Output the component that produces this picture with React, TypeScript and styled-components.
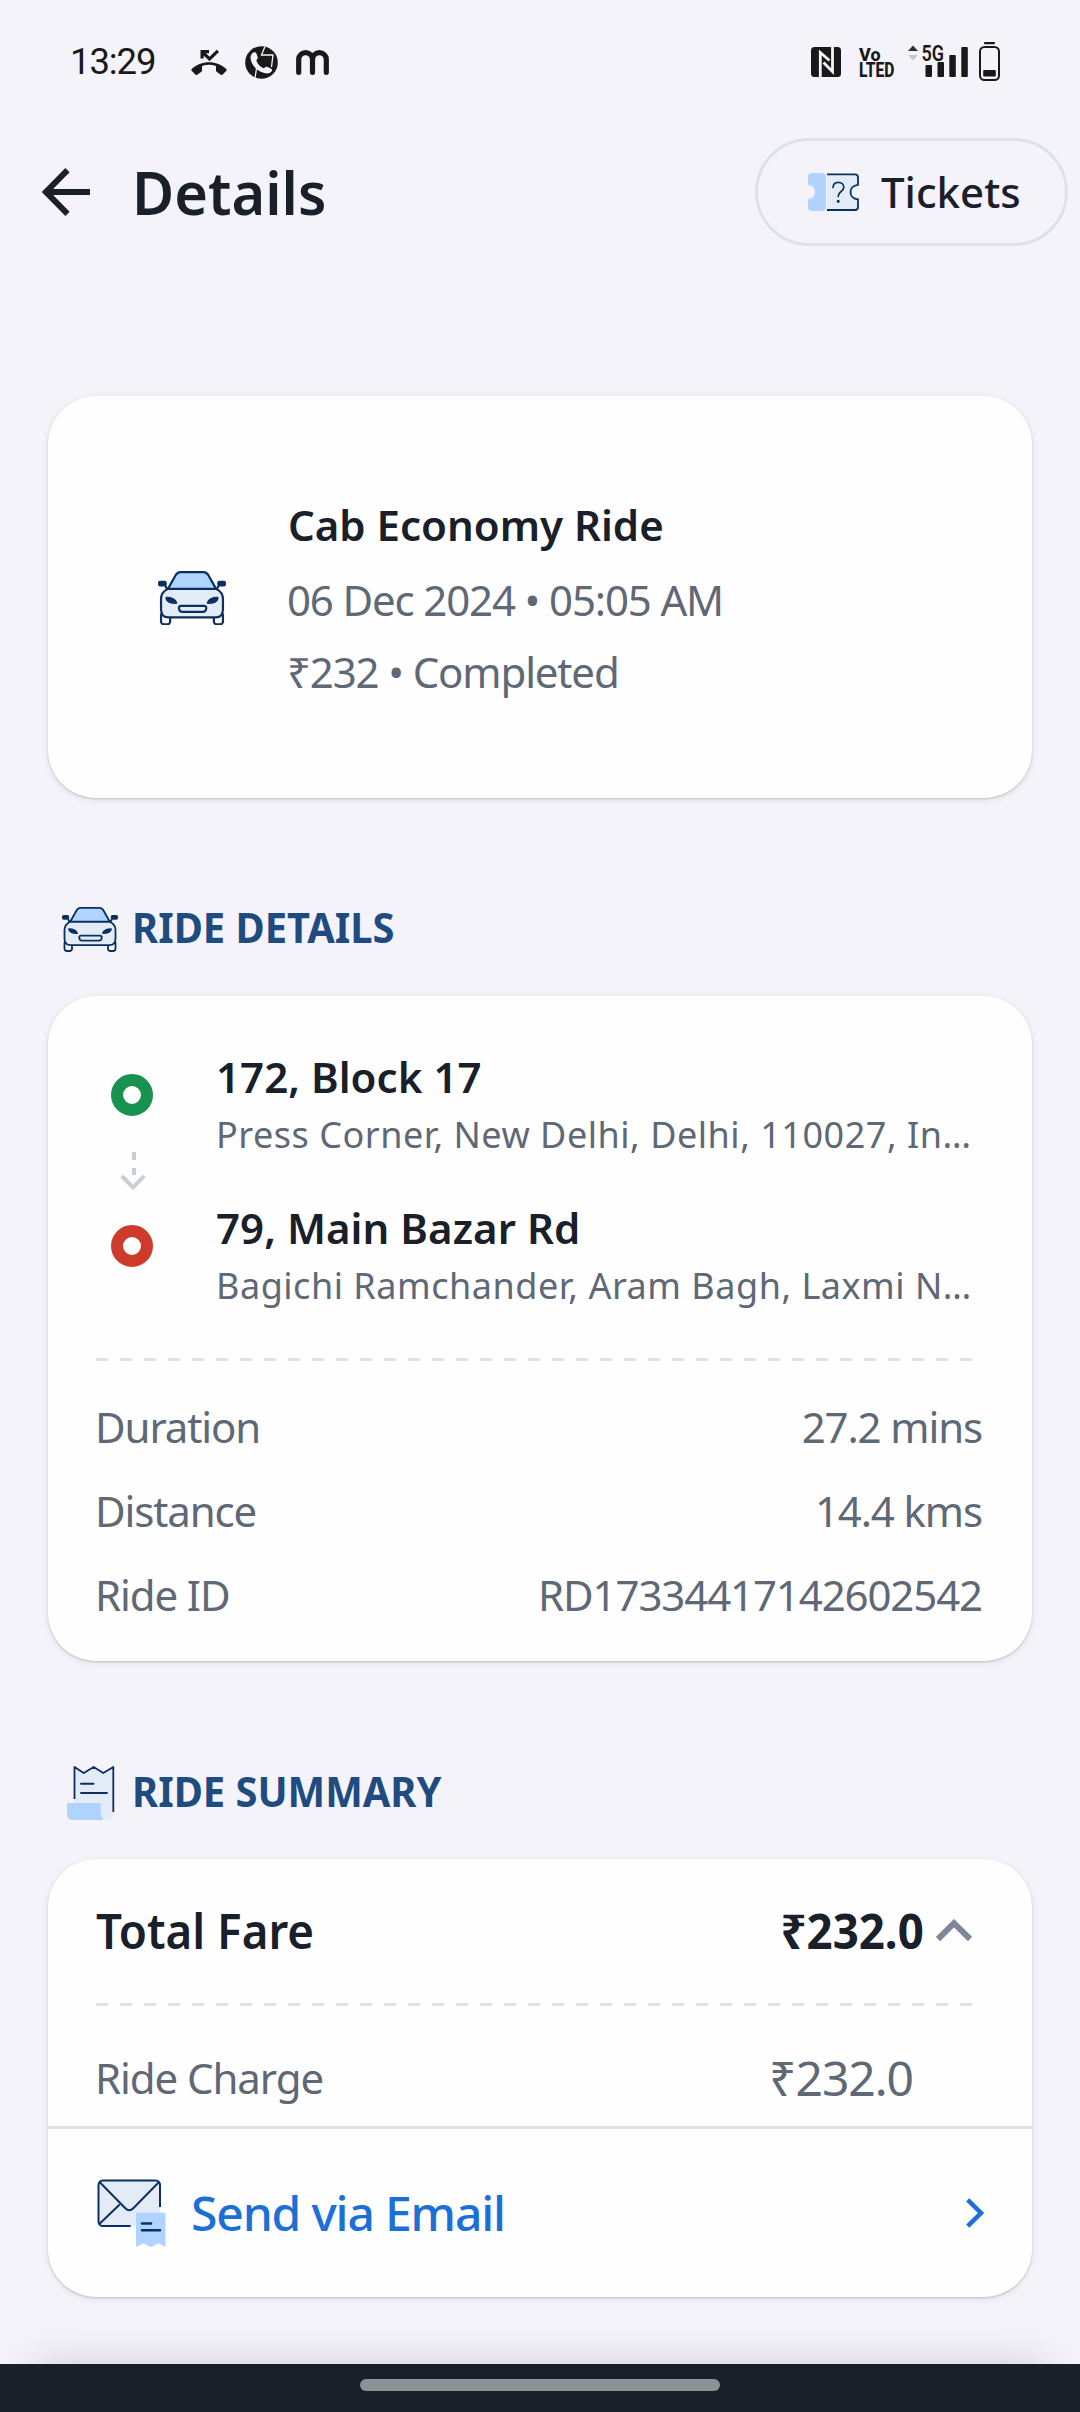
import React from "react";
import styled, { createGlobalStyle } from "styled-components";

const color = {
  page: "#f4f3fa",
  card: "#fefefe",
  ink: "#1a2029",
  muted: "#5f6875",
  heading: "#1f4b80",
  link: "#1b6fd6",
  rule: "#dee2e4",
  iconStroke: "#0b3060",
  iconTint: "#e3ebf6",
  iconBlue: "#b0d4ff",
  status: "#191919",
};

const GlobalStyle = createGlobalStyle`
  * { box-sizing: border-box; }
  body {
    margin: 0;
    background: ${color.page};
    font-family: "Noto Sans", "Open Sans", sans-serif;
    color: ${color.ink};
  }
  svg { display: block; flex: none; }
`;

const Screen = styled.div`
  position: relative;
  display: flex;
  flex-direction: column;
  width: 1080px;
  height: 2412px;
  overflow: hidden;
  background: ${color.page};
`;

/* ---------- status bar ---------- */

const StatusBar = styled.div`
  display: flex;
  align-items: center;
  justify-content: space-between;
  height: 124px;
  padding: 0 80px 0 70px;
`;

const StatusGroup = styled.div`
  display: flex;
  align-items: center;
`;

const Clock = styled.span`
  width: 121px;
  font-family: Roboto, "Noto Sans", sans-serif;
  font-size: 36.5px;
  line-height: 44px;
  letter-spacing: -1.1px;
  color: ${color.status};
`;

const NoticeIcons = styled.div`
  display: flex;
  align-items: center;
  gap: 18px;
`;

/* ---------- header ---------- */

const Header = styled.header`
  display: flex;
  align-items: center;
  height: 108px;
  margin-top: 14px;
  padding: 0 12px 0 42px;
`;

const PageTitle = styled.h1`
  flex: 1;
  margin: 0 0 0 42px;
  font-size: 60px;
  font-weight: 600;
  line-height: 80px;
  transform: scaleX(0.962);
  transform-origin: left;
`;

const TicketsButton = styled.button`
  display: flex;
  align-items: center;
  gap: 22px;
  width: 313px;
  height: 108px;
  padding: 0 0 0 50px;
  border: 3px solid ${color.rule};
  border-radius: 54px;
  background: transparent;
  color: ${color.ink};
  font: 500 42px/60px "Noto Sans", sans-serif;
`;

/* ---------- cards ---------- */

const Card = styled.section`
  flex: none;
  margin: 0 48px;
  border-radius: 48px;
  background: ${color.card};
  box-shadow: 0 1px 2px rgba(0, 0, 0, 0.16), 0 2px 7px rgba(0, 0, 0, 0.09);
`;

const OverviewCard = styled(Card)`
  display: flex;
  align-items: center;
  gap: 61px;
  height: 402px;
  margin-top: 150px;
  padding: 2px 48px 0 110px;
`;

const OverviewLines = styled.div`
  display: flex;
  flex-direction: column;
`;

const OverviewTitle = styled.div`
  height: 75px;
  margin-left: 1px;
  font-size: 42px;
  font-weight: 600;
  line-height: 72px;
`;

const OverviewLine = styled.div`
  font-size: 42px;
  line-height: 72px;
  letter-spacing: -1.15px;
  color: ${color.muted};
`;

const SectionHeading = styled.div<{ $top: number; $bottom: number; $indent: number; $gap: number }>`
  display: flex;
  align-items: center;
  gap: ${(p) => p.$gap}px;
  height: 62px;
  margin: ${(p) => p.$top}px 48px ${(p) => p.$bottom}px ${(p) => p.$indent}px;
`;

const HeadingIcon = styled.span`
  padding-top: 4px;
`;

const HeadingText = styled.h2`
  margin: 0;
  font-size: 42px;
  font-weight: 700;
  line-height: 60px;
  color: ${color.heading};
  transform: scaleX(0.949);
  transform-origin: left;
`;

const DetailsCard = styled(Card)`
  height: 665px;
  padding: 53px 48px 24px;
`;

const Route = styled.div`
  display: grid;
  grid-template-columns: 105px 1fr;
  padding-left: 15px;
`;

const Rail = styled.div`
  display: flex;
  flex-direction: column;
  width: 42px;
  padding-top: 25px;
`;

const StopDot = styled.div<{ $tone: string }>`
  width: 42px;
  height: 42px;
  border: 12px solid ${(p) => p.$tone};
  border-radius: 50%;
`;

const Stops = styled.div`
  display: flex;
  flex-direction: column;
  gap: 37px;
  min-width: 0;
`;

const StopName = styled.div`
  height: 56px;
  font-size: 42px;
  font-weight: 600;
  line-height: 56px;
  letter-spacing: 0.05px;
`;

const StopAddress = styled.div`
  height: 58px;
  font-size: 36px;
  line-height: 60px;
  letter-spacing: 0.52px;
  white-space: nowrap;
  color: ${color.muted};
`;

const DashedRule = styled.div<{ $top?: number }>`
  height: 3px;
  margin-top: ${(p) => p.$top ?? 0}px;
  background: repeating-linear-gradient(90deg, ${color.rule} 0 12px, transparent 12px 24px);
`;

const Facts = styled.dl`
  margin: 24px 0 0;
`;

const Fact = styled.div`
  display: flex;
  justify-content: space-between;
  padding: 0 2px 0 0;
  margin-left: -1px;
  font-size: 42px;
  line-height: 84px;
  letter-spacing: -1.12px;
  color: ${color.muted};
`;

const Term = styled.dt`
  margin: 0;
`;

const Value = styled.dd`
  margin: 0;
`;

/* ---------- fare summary ---------- */

const SummaryCard = styled(Card)`
  height: 438px;
`;

const SummaryBody = styled.div`
  height: 267px;
  padding: 0 48px;
`;

const TotalRow = styled.div`
  display: flex;
  align-items: center;
  height: 144px;
  padding-right: 12px;
  font-size: 48px;
  font-weight: 600;
  line-height: 66px;
`;

const TotalLabel = styled.span`
  flex: 1;
  transform: scaleX(0.952);
  transform-origin: left;
`;

const TotalAmount = styled.span`
  margin-right: 12px;
  font-weight: 700;
  transform: scaleX(0.95);
  transform-origin: right;
`;

const ChargeRow = styled.div`
  display: flex;
  align-items: center;
  justify-content: space-between;
  height: 120px;
  padding: 24px 71px 0 0;
  margin-left: -1px;
  color: ${color.muted};
`;

const ChargeLabel = styled.span`
  font-size: 42px;
  line-height: 60px;
  letter-spacing: -1.08px;
`;

const ChargeAmount = styled.span`
  font-size: 48px;
  line-height: 60px;
  letter-spacing: -1.04px;
`;

const EmailRow = styled.button`
  display: flex;
  align-items: center;
  width: 100%;
  height: 171px;
  padding: 0 48px 0 49px;
  border: 0;
  border-top: 3px solid ${color.rule};
  background: transparent;
  color: ${color.link};
`;

const EmailLabel = styled.span`
  flex: 1;
  margin-left: 25px;
  text-align: left;
  font: 500 48px/66px "Noto Sans", sans-serif;
  letter-spacing: -1.16px;
`;

/* ---------- bottom navigation ---------- */

const NavBar = styled.div`
  position: relative;
  display: flex;
  justify-content: center;
  height: 48px;
  margin-top: auto;
  padding-top: 15px;
  background: ${color.ink};
`;

const NavShadow = styled.div`
  position: absolute;
  left: 36px;
  right: 36px;
  bottom: 0;
  height: 44px;
  box-shadow: 0 0 46px rgba(0, 0, 0, 0.18);
`;

const NavHandle = styled.div`
  width: 360px;
  height: 12px;
  border-radius: 6px;
  background: #8d9094;
`;

/* ---------- icons ---------- */

const MissedCallIcon = () => (
  <svg width="36" height="27" viewBox="0 0 36 27" fill={color.status}>
    <path d="M9.500 1H18v3.200h-3L18.500 7.700 25.800.8 28 3 18.500 12.300 12.700 6.500v3H9.500z" />
    <path d="M.6 20.200C9.800 10.900 26.200 10.900 35.400 20.200c.5.5.5 1 0 1.500l-4 4c-.5.5-1.100.5-1.600.1l-3.900-2.900c-.7-.5-.9-1-.9-1.700v-4.300c-4.400-1.500-9.600-1.500-14 0v4.300c0 .7-.2 1.200-.9 1.700l-3.900 2.900c-.5.400-1.100.400-1.600-.1l-4-4c-.5-.5-.5-1 0-1.500z" />
  </svg>
);

const CallerIcon = () => (
  <svg width="33" height="33" viewBox="0 0 33 33" fill="none">
    <circle cx="16.500" cy="16.500" r="16.300" fill={color.status} />
    <path d="M20 .5 16.500 9H28l-1.500 12M11.500 22.500 10 32" stroke={color.page} strokeWidth="1.300" />
    <path
      d="M7.500 6.900c1.500-1.200 3.200-.9 3.900.7l1.200 3.200c.5 1.500-.2 2.300-1.300 3.400 1 3.600 3.600 6.600 7.600 8.100 1.200-1.500 2.200-2 3.600-1.300l3 1.200c1.500.7 2 2 1 3.300-1.700 2-4.600 2.400-8 1.200C11.500 24.500 6.900 19.500 5.700 13.200c-.4-2.600.2-4.900 1.800-6.300z"
      fill={color.page}
    />
  </svg>
);

const MLogoIcon = () => (
  <svg width="33" height="25" viewBox="0 0 33 25" fill="none">
    <path
      d="M2.700 22.300V9a6.900 6.300 0 0 1 13.800 0v13.300M16.500 9a6.900 6.300 0 0 1 13.800 0v13.300"
      stroke={color.status}
      strokeWidth="5.200"
      strokeLinecap="round"
    />
  </svg>
);

const SystemIcons = () => (
  <svg width="189" height="40" viewBox="0 0 189 40" fill={color.status}>
    <rect x="0" y="5" width="30" height="30" rx="3.500" />
    <path d="M9.300 35.500V10.500L18.500 18.500M21.500 4.500V29.500L12.500 20.500" fill="none" stroke={color.page} strokeWidth="2.800" />
    <g fontFamily="Roboto, sans-serif" fontWeight="800">
      <text x="48" y="18.500" fontSize="18.500" textLength="21.500" lengthAdjust="spacingAndGlyphs">Vo</text>
      <text x="48" y="34.800" fontSize="19.500" textLength="35.500" lengthAdjust="spacingAndGlyphs">LTED</text>
      <text x="110.500" y="18.600" fontSize="22" fontWeight="600" textLength="22.500" lengthAdjust="spacingAndGlyphs">5G</text>
    </g>
    <path d="M97 9l5-5.500 5 5.500z" opacity="0.9" />
    <path d="M97 13l5 5.500 5-5.500z" opacity="0.200" />
    <rect x="114.500" y="23" width="6.500" height="12" rx="1" />
    <rect x="126.500" y="20" width="6.500" height="15" rx="1" />
    <rect x="138.300" y="13" width="6.500" height="22" rx="1" />
    <rect x="150.300" y="5" width="6.500" height="30" rx="1" />
    <rect x="173" y="0" width="11" height="2.200" rx="1" />
    <rect x="169" y="5" width="19" height="33" rx="4.500" fill="none" stroke={color.status} strokeWidth="2" />
    <rect x="172.200" y="28" width="12.600" height="6.500" rx="1" />
  </svg>
);

const BackArrow = () => (
  <svg width="48" height="48" viewBox="0 0 48 48" fill="none" stroke={color.ink} strokeWidth="6">
    <path d="M48 24H5M25.500 2.200 4 24l21.500 21.800" />
  </svg>
);

const TicketIcon = () => (
  <svg width="51" height="38" viewBox="0 0 51 38">
    <path d="M4 0h10a4 4 0 0 1 4 4v30a4 4 0 0 1-4 4H4a4 4 0 0 1-4-4v-8a7 7 0 0 0 0-14V4a4 4 0 0 1 4-4z" fill={color.iconBlue} />
    <path
      d="M19 1.300h28c2 0 3 1 3 3v7.500c-10 1-10 13.600 0 14.600V34c0 2-1 3-3 3H19"
      fill={color.iconTint}
      stroke={color.iconStroke}
      strokeWidth="1.800"
    />
    <path
      d="M25 14.500c.2-3.500 2.300-5.200 5.300-5.200s5.500 2 5.500 5c0 4.500-5.600 4-5.600 9"
      fill="none"
      stroke={color.iconStroke}
      strokeWidth="1.700"
      strokeLinecap="round"
    />
    <circle cx="30.200" cy="28.200" r="1.500" fill={color.iconStroke} />
  </svg>
);

const CarIcon = ({ width }: { width: number }) => (
  <svg
    width={width}
    height={(width * 45) / 56}
    viewBox="0 0 56 45"
    stroke={color.iconStroke}
    strokeWidth="1.800"
    strokeLinejoin="round"
  >
    <path d="M2.500 35v6.500a2.500 2.500 0 0 0 2.500 2.500h2.500a2.500 2.500 0 0 0 2.500-2.500v-4M53.500 35v6.500a2.500 2.500 0 0 1-2.500 2.500h-2.500a2.500 2.500 0 0 1-2.500-2.500v-4" fill="#fbfbfe" />
    <path d="M8 14.700C3.500 17 2.500 19.500 2.500 23v8.500c0 4 2 6.700 6 6.700h39c4 0 6-2.700 6-6.700V23c0-3.500-1-6-5.500-8.300z" fill={color.iconTint} />
    <path d="M8.200 14.700 14.500 3.500C15.500 1.700 16.500.9 18.500.9h19c2 0 3 .8 4 2.600l6.300 11.200z" fill={color.iconBlue} />
    <path d="M6 12.200 8 15.500M50 12.200 48 15.500" />
    <rect x="0.900" y="8.900" width="5.400" height="3" rx="0.800" fill={color.iconStroke} />
    <rect x="49.700" y="8.900" width="5.400" height="3" rx="0.800" fill={color.iconStroke} />
    <path d="M7 22.200c4.500 0 7 1.200 8 4-4.500 0-7.500-.5-8-4zM49 22.200c-4.500 0-7 1.200-8 4 4.500 0 7.500-.5 8-4z" fill={color.iconStroke} />
    <path d="M19 28.700h18.500c2 0 2.500 1 2.200 2.500-.3 1.700-1 2.500-2.700 2.500H20c-1.700 0-2.400-.8-2.700-2.500-.3-1.500.2-2.500 1.700-2.500z" fill={color.iconTint} />
  </svg>
);

const RouteArrow = () => (
  <svg width="42" height="109" viewBox="0 0 42 109" fill="none">
    <path d="M23 36v8M23 52v7" stroke="#c8ced8" strokeWidth="4" />
    <path d="M10.800 60 22 71.300 33.200 60" stroke="#c8ced8" strokeWidth="4" />
  </svg>
);

const ReceiptIcon = () => (
  <svg width="48" height="54" viewBox="0 0 48 54">
    <path d="M7.500.8 16.700 7l10-6 9.600 6L46.300.8V47L36 44 7.500 38z" fill={color.iconTint} />
    <path d="M0 37h36v17H5a5 5 0 0 1-5-5z" fill={color.iconBlue} />
    <path d="M33.800 34v13c0 4 2.200 7 6.200 7s6.500-3 6.500-8V34z" fill={color.iconTint} />
    <path
      d="M7.500 33V1l9.200 6 10-6 9.600 6 10-6v45"
      fill="none"
      stroke={color.iconStroke}
      strokeWidth="1.800"
      strokeLinejoin="round"
    />
    <path d="M14 17.800h12.500M14 27h26" stroke={color.iconStroke} strokeWidth="1.900" strokeLinecap="round" />
  </svg>
);

const EmailIcon = () => (
  <svg width="69" height="69" viewBox="0 0 69 69">
    <rect x="1.500" y="1.500" width="61.500" height="45.500" rx="4.500" fill={color.iconTint} />
    <path
      d="M33.700 47H6a4.500 4.500 0 0 1-4.500-4.500V6A4.500 4.500 0 0 1 6 1.500h52.500A4.500 4.500 0 0 1 63 6v22M2.800 3.200l25.500 26c2.500 2.500 5.500 2.500 8 0l25.500-26M2.300 45l20.400-19.500"
      fill="none"
      stroke={color.iconStroke}
      strokeWidth="2"
    />
    <path d="M39 34.700a1 1 0 0 1 1-1h27.500a1 1 0 0 1 1 1V68l-7.400-3.700-7.300 4-7.300-4L39 68z" fill={color.iconBlue} />
    <path d="M45 44.500h9M45 51.300h18" stroke={color.iconStroke} strokeWidth="2.600" strokeLinecap="round" />
  </svg>
);

const ChevronUp = () => (
  <svg width="36" height="24" viewBox="0 0 36 24" fill="none">
    <path d="M2 20 18 4.200 34 20" stroke="#7e8899" strokeWidth="6" />
  </svg>
);

const ChevronRight = () => (
  <svg width="18" height="30" viewBox="0 0 18 30" fill="none">
    <path d="M1.700 1.800 15 15 1.700 28.200" stroke={color.link} strokeWidth="4.500" />
  </svg>
);

/* ---------- data ---------- */

const stops = [
  { name: "172, Block 17", address: "Press Corner, New Delhi, Delhi, 110027, In…" },
  { name: "79, Main Bazar Rd", address: "Bagichi Ramchander, Aram Bagh, Laxmi N…" },
];

const facts = [
  { term: "Duration", value: "27.2 mins" },
  { term: "Distance", value: "14.4 kms" },
  { term: "Ride ID", value: "RD17334417142602542" },
];

export default function App() {
  return (
    <Screen>
      <GlobalStyle />
      <StatusBar>
        <StatusGroup>
          <Clock>13:29</Clock>
          <NoticeIcons>
            <MissedCallIcon />
            <CallerIcon />
            <MLogoIcon />
          </NoticeIcons>
        </StatusGroup>
        <SystemIcons />
      </StatusBar>

      <Header>
        <BackArrow />
        <PageTitle>Details</PageTitle>
        <TicketsButton>
          <TicketIcon />
          Tickets
        </TicketsButton>
      </Header>

      <OverviewCard>
        <CarIcon width={68} />
        <OverviewLines>
          <OverviewTitle>Cab Economy Ride</OverviewTitle>
          <OverviewLine>06 Dec 2024 • 05:05 AM</OverviewLine>
          <OverviewLine>₹232 • Completed</OverviewLine>
        </OverviewLines>
      </OverviewCard>

      <SectionHeading $top={98} $bottom={38} $indent={62} $gap={14}>
        <HeadingIcon>
          <CarIcon width={56} />
        </HeadingIcon>
        <HeadingText>RIDE DETAILS</HeadingText>
      </SectionHeading>

      <DetailsCard>
        <Route>
          <Rail>
            <StopDot $tone="#18924f" />
            <RouteArrow />
            <StopDot $tone="#ce3b2a" />
          </Rail>
          <Stops>
            {stops.map((stop) => (
              <div key={stop.name}>
                <StopName>{stop.name}</StopName>
                <StopAddress>{stop.address}</StopAddress>
              </div>
            ))}
          </Stops>
        </Route>
        <DashedRule $top={44} />
        <Facts>
          {facts.map((fact) => (
            <Fact key={fact.term}>
              <Term>{fact.term}</Term>
              <Value>{fact.value}</Value>
            </Fact>
          ))}
        </Facts>
      </DetailsCard>

      <SectionHeading $top={99} $bottom={37} $indent={67} $gap={17}>
        <HeadingIcon>
          <ReceiptIcon />
        </HeadingIcon>
        <HeadingText>RIDE SUMMARY</HeadingText>
      </SectionHeading>

      <SummaryCard>
        <SummaryBody>
          <TotalRow>
            <TotalLabel>Total Fare</TotalLabel>
            <TotalAmount>₹232.0</TotalAmount>
            <ChevronUp />
          </TotalRow>
          <DashedRule />
          <ChargeRow>
            <ChargeLabel>Ride Charge</ChargeLabel>
            <ChargeAmount>₹232.0</ChargeAmount>
          </ChargeRow>
        </SummaryBody>
        <EmailRow>
          <EmailIcon />
          <EmailLabel>Send via Email</EmailLabel>
          <ChevronRight />
        </EmailRow>
      </SummaryCard>

      <NavShadow />
      <NavBar>
        <NavHandle />
      </NavBar>
    </Screen>
  );
}
